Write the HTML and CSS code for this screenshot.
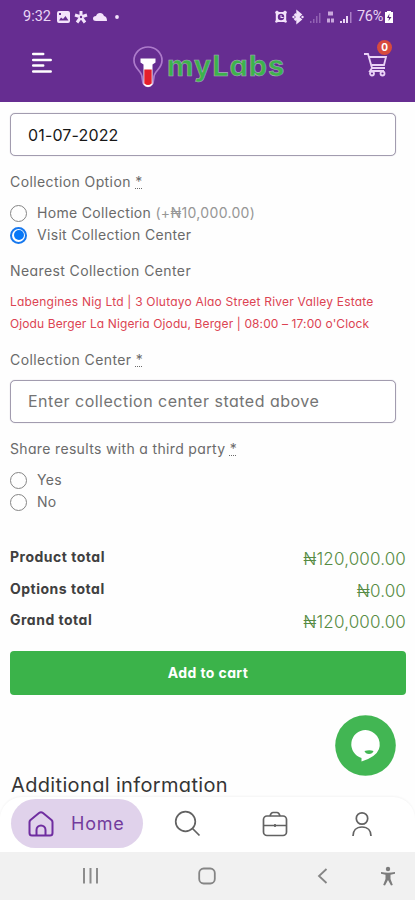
FILE: index.html
```html
<!DOCTYPE html>
<html lang="en">
<head>
<meta charset="utf-8">
<meta name="viewport" content="width=device-width, initial-scale=1">
<title>myLabs</title>
<link rel="stylesheet" href="styles.css">
</head>
<body>
<div class="screen">
  <header class="top">
    <div class="status">
      <span class="clock">9:32</span>
      <svg class="status-left" width="66" height="16" viewBox="0 0 66 16" fill="#f3e3fb">
        <path fill-rule="evenodd" d="M3 2h9q2 0 2 2v8q0 2-2 2H3q-2 0-2-2V4q0-2 2-2zM3 11.500h9.500L9.500 7 7 10 5 8.500zM3 4v2h2V4z"/>
        <path d="M25 8V2M25 8l6-2M25 8l4 5.500M25 8l-4 5.500M25 8l-6-2" stroke="#f3e3fb" stroke-width="3"/><circle cx="25" cy="8" r="1.200" fill="#662d91"/>
        <path d="M40 12q-3 0-3-2.500T40 7q1-3 4-3t4 3q3 .5 3 5z"/>
        <circle cx="61" cy="8" r="1.900"/>
      </svg>
      <svg class="status-right" width="83" height="16" viewBox="0 0 83 16" fill="#f3e3fb">
        <path d="M0 3l2-1.500L4 3h4l2-1.500L12 3l-.8 2v6l.8 2-1.500.8L9 13H3l-1.500.8L0 13l.8-2V5z"/><circle cx="6" cy="8" r="3.200" fill="#662d91"/><path d="M5.500 6h1v2h2v1h-3z"/>
        <path d="M19.500 5l6 5.500-3 2.500V3l3 2.500-6 5.500" fill="none" stroke="#f3e3fb" stroke-width="2.400"/><circle cx="18.500" cy="8" r="1.200"/><circle cx="27.500" cy="8" r="1.200"/>
        <g fill="#aa7fc6"><path d="M35 12h1.500v2H35zM38 10h1.500v4H38zM41 7h1.500v7H41zM44 4h1.500v10H44z" opacity=".65"/><path d="M53 2.500h5v4h-5zM52 9.500h3v4h-3zM56 9.500h3v4h-3z" fill="#c9a8dc"/><path d="M65 12h2v2h-2zM68 10h2v4h-2zM71 7h2v7h-2z" fill="#ead5f5"/><path d="M75 3h1.500v11H75z"/></g>
      </svg>
      <span class="percent">76%</span>
      <svg class="battery" width="10" height="14" viewBox="0 0 10 14"><path d="M3 1h4v1h2v11H1V2h2z" fill="#fff"/><path d="M5.500 3.500L3 8h2l-.5 3L7.500 7H5z" fill="#552277"/></svg>
    </div>
    <div class="brand-bar">
      <svg class="menu" width="22" height="22" viewBox="0 0 22 22" stroke="#fff" stroke-width="2.500" stroke-linecap="round"><path d="M2.200 2h10M2.200 8h17.500M2.200 13.500h10M2.200 19.500h17.500"/></svg>
      <div class="brand">
        <svg width="32" height="44" viewBox="0 0 32 44">
          <path d="M11 38l-1-6C10 26 2 24 2 15.500a14 13.500 0 0 1 28 0C30 24 22 26 22 32l-1 6q-5 7-10 0z" fill="none" stroke="#ad7bcb" stroke-width="1.700"/>
          <path d="M8.500 13.500h15v4l-3 2v20q-4.500 5-9 0v-20l-3-2z" fill="#fff"/>
          <path d="M12.300 24.500h7.400v14q-3.700 3-7.400 0z" fill="#e51f2b"/>
        </svg>
        <span class="wordmark">myLabs</span>
      </div>
      <div class="cart">
        <svg width="25" height="25" viewBox="0 0 25 25" fill="none" stroke="#ead3f6" stroke-width="1.800"><path d="M1 2h4l4 14h13M6 5h17l-2 8H9M9 16l-2 3h14"/><circle cx="9" cy="21.500" r="2"/><circle cx="19.500" cy="21.500" r="2"/></svg>
        <span class="badge">0</span>
      </div>
    </div>
  </header>

  <main class="content">
    <div class="field date">01-07-2022</div>
    <div class="label option-label">Collection Option <span class="req">*</span></div>
    <div class="choices first">
      <div class="choice"><i class="radio"></i><span>Home Collection <span class="fee">(+₦10,000.00)</span></span></div>
      <div class="choice"><i class="radio on"></i><span>Visit Collection Center</span></div>
    </div>
    <div class="label nearest">Nearest Collection Center</div>
    <div class="address"><div class="street">Labengines Nig Ltd | 3 Olutayo Alao Street River Valley Estate</div><div class="hours">Ojodu Berger La Nigeria Ojodu, Berger | 08:00 – 17:00 o'Clock</div></div>
    <div class="label center-label">Collection Center <span class="req">*</span></div>
    <div class="field center">Enter collection center stated above</div>
    <div class="label share">Share results with a third party <span class="req">*</span></div>
    <div class="choices second">
      <div class="choice"><i class="radio"></i><span>Yes</span></div>
      <div class="choice"><i class="radio"></i><span>No</span></div>
    </div>
    <div class="totals">
      <div class="total"><b>Product total</b><span>₦120,000.00</span></div>
      <div class="total"><b>Options total</b><span>₦0.00</span></div>
      <div class="total"><b>Grand total</b><span>₦120,000.00</span></div>
    </div>
    <div class="button">Add to cart</div>
    <h2 class="more">Additional information</h2>
  </main>

  <div class="chat"><svg width="61" height="61" viewBox="0 0 61 61"><circle cx="30.500" cy="30.500" r="30.300" fill="#42b653"/><path d="M30.500 15a14.500 14.500 0 0 1 13.500 19q-3 8-17.500 12.500v-3.500A14.300 14.300 0 0 1 30.500 15z" fill="#fff"/><path d="M29.500 36q5-1.500 9 0-1 3-4.500 3t-4.500-3z" fill="#42b653"/></svg></div>

  <nav class="tabs">
    <div class="home"><svg width="28" height="28" viewBox="0 0 28 28" fill="none" stroke="#6f2da0" stroke-width="2" stroke-linejoin="round"><path d="M2.500 12q0-1 1-2L12 3q2-1.500 4 0l8.500 7q1 1 1 2v11q0 2.500-2.500 2.500H5Q2.500 25.500 2.500 23z"/><path d="M9.500 25v-5a4.500 4.500 0 0 1 9 0v5"/></svg><span>Home</span></div>
    <div class="tab"><svg width="27" height="27" viewBox="0 0 27 27" fill="none" stroke="#626262" stroke-width="1.700"><circle cx="11.500" cy="11.500" r="9.800"/><path d="M18.500 18.500l7 7"/></svg></div>
    <div class="tab"><svg width="26" height="26" viewBox="0 0 26 26" fill="none" stroke="#626262" stroke-width="1.700"><rect x="1.500" y="5" width="23" height="19.500" rx="3.500"/><path d="M8 5q1-3.500 3-3.500h4Q17 1.500 18 5M2 14.500h22M13 13v3"/></svg></div>
    <div class="tab"><svg width="22" height="26" viewBox="0 0 22 26" fill="none" stroke="#626262" stroke-width="1.700"><circle cx="11" cy="7.500" r="5.700"/><path d="M2 25c0-5 3-9 9-9s9 4 9 9"/></svg></div>
  </nav>
  <footer class="system">
    <svg width="18" height="18" viewBox="0 0 18 18" stroke="#8c8c8c" stroke-width="2"><path d="M3 1v15.500M9.500 1v15.500M16 1v15.500"/></svg>
    <svg width="18" height="18" viewBox="0 0 18 18" fill="none" stroke="#858585" stroke-width="1.800"><rect x="1.200" y="1.500" width="15.600" height="15" rx="4.500"/></svg>
    <svg width="12" height="18" viewBox="0 0 12 18" fill="none" stroke="#858585" stroke-width="1.800"><path d="M9.500 2L2 9l7.500 7"/></svg>
    <svg width="16" height="20" viewBox="0 0 16 20" fill="#7c7c7c"><circle cx="8" cy="3" r="2.200"/><path d="M1 6q7 1.500 14 0v1.800l-4.500 1V13l2.300 6-1.800.5L8 14l-3 5.500-1.800-.5L5.500 13V8.800L1 7.800z"/></svg>
  </footer>
</div>
</body>
</html>
```
FILE: styles.css
```css
* { box-sizing: border-box; }
body { margin: 0; background: #fefefe; font-family: Inter, sans-serif; font-feature-settings: "cv11"; font-size: 14px; color: #6a6a6a; }
svg { display: block; flex: none; }
.screen { position: relative; width: 415px; height: 900px; overflow: hidden; display: flex; flex-direction: column; white-space: nowrap; }
.top { height: 102px; flex: none; background: #662d91; }
.status { height: 33px; padding: 0 20px 0 23px; display: flex; align-items: center; color: #ead5f5; font-family: Roboto, sans-serif; font-size: 14.5px; }
.clock { width: 33px; }
.status-right { margin-left: auto; }
.percent { width: 27px; margin-left: -1px; letter-spacing: -.3px; }
.battery { margin-left: 0; margin-right: 1px; }
.brand-bar { height: 69px; display: flex; align-items: flex-start; padding: 19px 27px 0 31px; }
.brand { display: flex; margin: -7px 0 0 79px; height: 44px; align-items: center; }
.wordmark { margin: -4px 0 0 3px; color: #3db34c; font-size: 29px; font-weight: 700; letter-spacing: .9px; -webkit-text-stroke: .6px #a9a5bd; }
.cart { position: relative; margin-left: auto; }
.badge { position: absolute; left: 14px; top: -12px; width: 15px; height: 15px; border-radius: 50%; background: #d84b3e; color: #fff; font: bold 10px/15px Inter, sans-serif; text-align: center; }
.content { flex: none; height: 695px; padding: 11px 9px 0 10px; }
.field { width: 386px; height: 43px; border: 1px solid #a29caf; border-radius: 5px; background: #fff; display: flex; align-items: center; padding-left: 17px; font-size: 16px; box-shadow: 0 0 1px #b3adbd; }
.date { color: #171717; letter-spacing: .15px; }
.center { color: #747474; margin-top: 9px; padding-bottom: 1px; letter-spacing: .5px; }
.label { height: 22px; line-height: 22px; letter-spacing: .4px; }
.req { text-decoration: underline dotted 1px; text-underline-offset: 1px; }
.option-label { margin-top: 15px; }
.choices { display: grid; grid-auto-rows: 21.5px; }
.first { margin-top: 9px; }
.choice { display: flex; align-items: center; gap: 10px; letter-spacing: .32px; }
.fee { color: #969696; }
.radio { width: 17px; height: 17px; border: 1px solid #858585; border-radius: 50%; display: grid; place-items: center; position: relative; top: 1px; }
.on { border: 2px solid #1778ee; }
.on::after { content: ""; width: 10px; height: 10px; border-radius: 50%; background: #0878f7; }
.nearest { margin-top: 15px; }
.address { margin-top: 9px; line-height: 21.5px; font-size: 12px; color: #dc4352; }
.street { letter-spacing: .21px; }
.hours { letter-spacing: .11px; }
.center-label { margin-top: 15px; }
.share { margin-top: 15px; letter-spacing: .34px; }
.second { margin-top: 9px; }
.totals { margin-top: 31px; display: grid; grid-auto-rows: 31.5px; }
.total { display: flex; justify-content: space-between; line-height: 28px; }
.total b { color: #404040; letter-spacing: .5px; }
.total span { position: relative; top: 2px; font-size: 17px; font-weight: 300; letter-spacing: .15px; color: #568b43; }
.button { margin-top: 13px; height: 44px; border-radius: 4px; background: #3bb34a; color: #fff; font-weight: 700; letter-spacing: .4px; line-height: 44px; text-align: center; }
.more { margin: 76px 0 0 1px; font-size: 20px; line-height: 28px; font-weight: 400; letter-spacing: .35px; color: #353535; }
.chat { position: absolute; left: 335px; top: 715px; }
.tabs { height: 55px; flex: none; border-radius: 22px 22px 0 0; background: #fff; box-shadow: 0 -1px 2px #f4f4f4; padding: 2px 0 4px 11px; display: grid; grid-template-columns: 132px 88px 87px 87px; align-items: center; }
.home { height: 49px; border-radius: 25px; background: #e0d2eb; display: flex; align-items: center; gap: 16px; padding-left: 16px; color: #733b9d; font-size: 18px; letter-spacing: .8px; }
.tab { display: grid; place-items: center; }
.system { height: 48px; flex: none; background: #f1f1f1; display: grid; grid-template-columns: 90px 117px 113px 67px; justify-items: end; align-items: center; padding: 0 19px 0 9px; }
```
